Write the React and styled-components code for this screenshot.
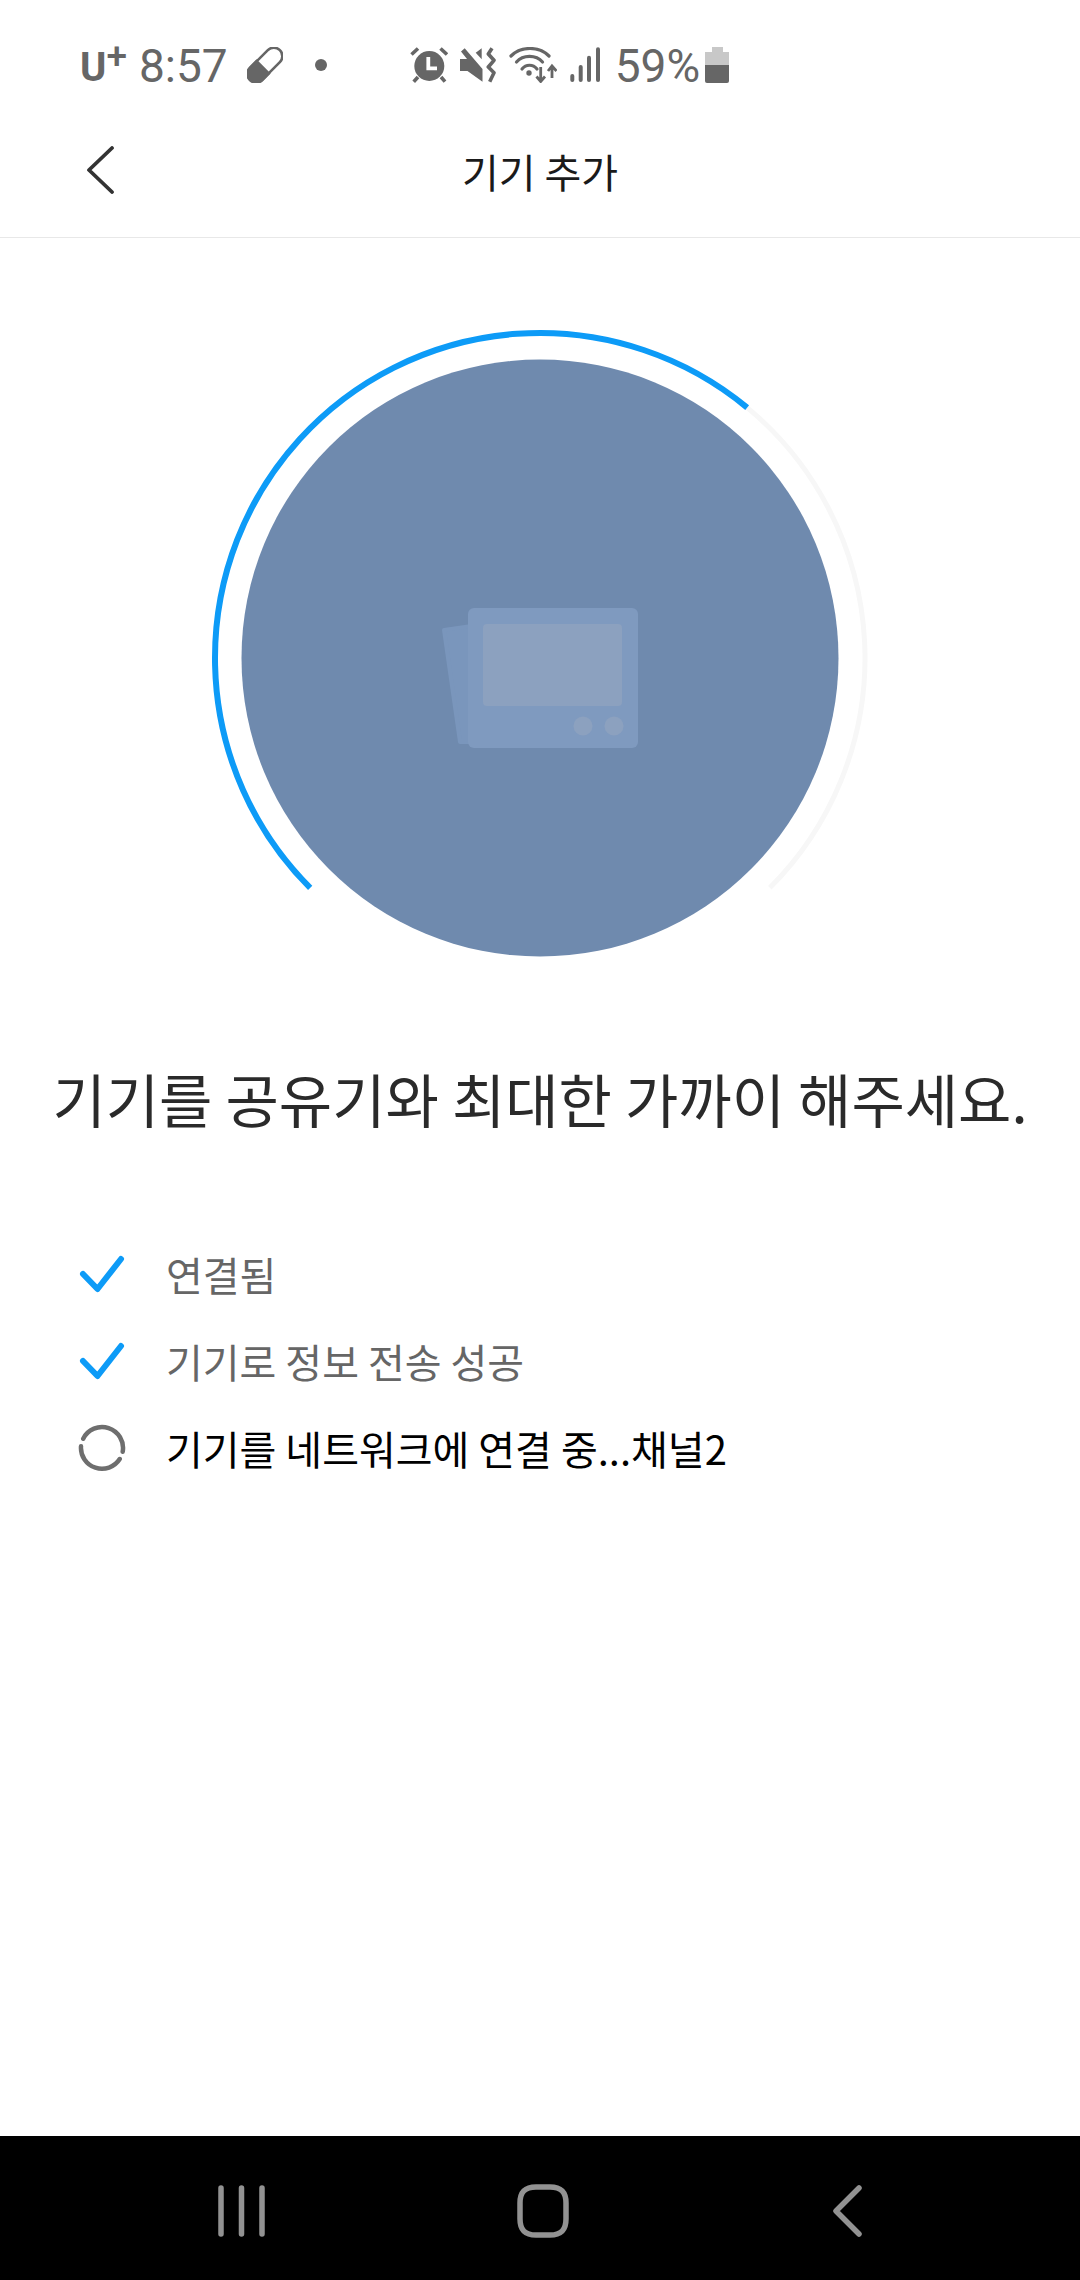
import styled, { createGlobalStyle } from 'styled-components';

const GlobalStyle = createGlobalStyle`
  html, body {
    margin: 0;
    padding: 0;
    background: #fff;
  }
`;

const Screen = styled.div`
  display: flex;
  flex-direction: column;
  width: 1080px;
  height: 2280px;
  overflow: hidden;
  background: #fff;
  font-family: "Noto Sans CJK KR", "Noto Sans", sans-serif;
`;

const StatusBar = styled.div`
  display: flex;
  align-items: center;
  height: 70px;
  padding: 30px 0 0 80px;
  color: #666;
  font-family: Roboto, sans-serif;
`;

const Carrier = styled.div`
  display: flex;
  align-items: flex-start;
  width: 45px;
  height: 36px;
  margin-top: 6px;
  font-size: 40px;
  line-height: 36px;
  font-weight: 700;
`;

const CarrierPlus = styled.span`
  margin: -3px 0 0 0;
  font-size: 37px;
  line-height: 20px;
  font-weight: 500;
`;

const StatusText = styled.span`
  margin: 2px 0 0 ${props => props.$gap}px;
  font-size: 46px;
  line-height: 40px;
`;

const StatusIcon = styled.svg`
  display: block;
  flex: none;
  margin-left: ${props => props.$gap}px;
  fill: #666;
`;

const Header = styled.header`
  display: flex;
  align-items: center;
  justify-content: center;
  position: relative;
  height: 138px;
  box-sizing: border-box;
  border-bottom: 1px solid #e8e8e8;
`;

const BackButton = styled.svg`
  position: absolute;
  left: 85px;
  top: 46px;
`;

const Title = styled.h1`
  margin: 4px 0 0;
  font-size: 40px;
  line-height: 60px;
  font-weight: 400;
  color: #1a1a1a;
`;

const Content = styled.main`
  display: flex;
  flex-direction: column;
  flex: 1;
`;

const Dial = styled.svg`
  display: block;
  margin: 90px auto 0;
`;

const Heading = styled.h2`
  margin: 70px 0 0;
  text-align: center;
  font-size: 58px;
  line-height: 80px;
  font-weight: 400;
  color: #2a2a2a;
  white-space: nowrap;
`;

const Steps = styled.ul`
  display: flex;
  flex-direction: column;
  gap: 27px;
  margin: 106px 0 0;
  padding: 0 0 0 78px;
  list-style: none;
`;

const Step = styled.li`
  display: flex;
  align-items: center;
  gap: 40px;
  height: 60px;
  font-size: 40px;
  line-height: 60px;
  color: ${props => (props.$active ? '#000' : '#666')};
`;

const StepIcon = styled.svg`
  display: block;
  flex: none;
  fill: none;
  stroke-linecap: round;
  stroke-linejoin: round;
`;

const NavBar = styled.nav`
  display: flex;
  align-items: center;
  height: 144px;
  box-sizing: border-box;
  padding: 6px 0 0 218px;
  background: #000;
`;

const NavIcon = styled.svg`
  display: block;
  flex: none;
  margin-left: ${props => props.$gap || 0}px;
  fill: none;
  stroke: #929292;
  stroke-width: 5.5;
  stroke-linecap: round;
  stroke-linejoin: round;
`;

const polar = (r, deg) => {
  const a = (deg * Math.PI) / 180;
  return [330 + r * Math.sin(a), 330 - r * Math.cos(a)];
};

const arc = (r, from, to) => {
  const [x1, y1] = polar(r, from);
  const [x2, y2] = polar(r, to);
  const large = to - from > 180 ? 1 : 0;
  return `M${x1} ${y1}A${r} ${r} 0 ${large} 1 ${x2} ${y2}`;
};

const Check = () => (
  <StepIcon width="48" height="40" viewBox="0 0 48 40" stroke="#0d9bf7" strokeWidth="6">
    <path d="M5 20 L19.5 35 L43 5" />
  </StepIcon>
);

const Spinner = () => (
  <StepIcon width="48" height="48" viewBox="0 0 48 48" stroke="#6e6e6e" strokeWidth="4.5">
    <path d="M5.2 14.7 A21 21 0 0 1 44.7 27.7" />
    <path d="M41.7 35 A21 21 0 0 1 3 22.3" />
  </StepIcon>
);

const App = () => (
  <Screen>
    <GlobalStyle />
    <StatusBar>
      <Carrier>U<CarrierPlus>+</CarrierPlus></Carrier>
      <StatusText $gap={14}>8:57</StatusText>
      <StatusIcon $gap={19} width="36" height="36" viewBox="0 0 36 36">
        <g transform="rotate(-45 18 18)">
          <rect x="-3" y="9.5" width="42" height="17" rx="8.5" fill="#fff" stroke="#666" strokeWidth="2.6" />
          <path d="M16 8 H5.5 a10 10 0 0 0 0 20 H16 Z" />
        </g>
      </StatusIcon>
      <StatusIcon $gap={32} width="12" height="12" viewBox="0 0 12 12">
        <circle cx="6" cy="6" r="6" />
      </StatusIcon>
      <StatusIcon $gap={83} width="38" height="36" viewBox="0 0 38 36">
        <circle cx="19.3" cy="19" r="15" />
        <path d="M18.3 10 V21.3 H27" fill="none" stroke="#fff" strokeWidth="3.8" />
        <path d="M1.5 7.5 L8 1.5 M37 7.5 L30.5 1.5 M8 30 L3.7 34.7 M31 30 L35 34.7" stroke="#666" strokeWidth="3.6" />
      </StatusIcon>
      <StatusIcon $gap={12} width="36" height="36" viewBox="0 0 36 36">
        <path d="M1 4.5 L4.7 1.3 L22.5 22 V34.7 L7.5 24 H0 V12 H7 Z" />
        <path d="M15.7 5.7 L21.7 1.3 V12.3 Z" />
        <path d="M32 1.3 L28.3 7 L34 13.3 L28.3 20 L34 25.7 L29.7 34.7" fill="none" stroke="#666" strokeWidth="3.6" strokeLinejoin="round" />
      </StatusIcon>
      <StatusIcon $gap={13} width="48" height="36" viewBox="0 0 48 36">
        <g fill="none" stroke="#666" strokeWidth="3.2" strokeLinecap="round">
          <path d="M2 9 C12 -1 30 -1 40 9" />
          <path d="M7.5 15 C14 7.5 27 7.5 33.5 15" />
          <path d="M13 22 C17 17 24 17 28 22" />
        </g>
        <circle cx="20" cy="26" r="2.7" />
        <path d="M31.7 20 V34 M27.5 29.5 L31.7 34.5 L36 29.5" fill="none" stroke="#666" strokeWidth="2.8" />
        <path d="M43 31 V19.5 M39 24 L43 19 L47.5 24" fill="none" stroke="#666" strokeWidth="2.8" />
      </StatusIcon>
      <StatusIcon $gap={12} width="32" height="36" viewBox="0 0 32 36">
        <g fill="none" stroke="#666" strokeWidth="4" strokeLinecap="round">
          <path d="M3.3 29 V33" />
          <path d="M11.7 20 V33" />
          <path d="M20 10.7 V33" />
          <path d="M29 2.3 V33" />
        </g>
      </StatusIcon>
      <StatusText $gap={14}>59%</StatusText>
      <StatusIcon $gap={5} width="24" height="36" viewBox="0 0 24 36">
        <path d="M7 0 H18 V5 H24 V18 H0 V5 H7 Z" fill="#c8c8c8" />
        <path d="M0 18 H24 V34 a2 2 0 0 1 -2 2 H2 a2 2 0 0 1 -2 -2 Z" />
      </StatusIcon>
    </StatusBar>

    <Header>
      <BackButton width="30" height="48" viewBox="0 0 30 48" fill="none" stroke="#333" strokeWidth="3.8" strokeLinecap="round" strokeLinejoin="round">
        <path d="M27 2 L4 24 L27 46" />
      </BackButton>
      <Title>기기 추가</Title>
    </Header>

    <Content>
      <Dial width="660" height="660" viewBox="0 0 660 660">
        <path d={arc(325, 39.6, 135)} fill="none" stroke="#f7f7f7" strokeWidth="5" />
        <path d={arc(325, 225, 399.6)} fill="none" stroke="#0d9bf7" strokeWidth="6" />
        <circle cx="330" cy="330" r="298.5" fill="#6f8aae" />
        <path d="M234 302 L262 298 V414 H250 Z" fill="#7a96bc" stroke="#7a96bc" strokeWidth="4" strokeLinejoin="round" />
        <rect x="258" y="280" width="170" height="140" rx="6" fill="#7f9abf" />
        <rect x="273" y="296" width="139" height="82" rx="4" fill="#8ca1bf" />
        <circle cx="373" cy="398" r="9.5" fill="#8ca1bf" />
        <circle cx="404" cy="398" r="9.5" fill="#8ca1bf" />
      </Dial>

      <Heading>기기를 공유기와 최대한 가까이 해주세요.</Heading>

      <Steps>
        <Step>
          <Check />
          연결됨
        </Step>
        <Step>
          <Check />
          기기로 정보 전송 성공
        </Step>
        <Step $active>
          <Spinner />
          기기를 네트워크에 연결 중...채널2
        </Step>
      </Steps>
    </Content>

    <NavBar>
      <NavIcon width="47" height="52" viewBox="0 0 47 52">
        <path d="M3 3 V49 M23.5 3 V49 M44 3 V49" />
      </NavIcon>
      <NavIcon $gap={252} width="52" height="54" viewBox="0 0 52 54">
        <path d="M19 3 H33 C44 3 49 8 49 19 V35 C49 46 44 51 33 51 H19 C8 51 3 46 3 35 V19 C3 8 8 3 19 3 Z" />
      </NavIcon>
      <NavIcon $gap={263} width="30" height="52" viewBox="0 0 30 52">
        <path d="M27 3 L4 26 L27 49" />
      </NavIcon>
    </NavBar>
  </Screen>
);

export default App;
